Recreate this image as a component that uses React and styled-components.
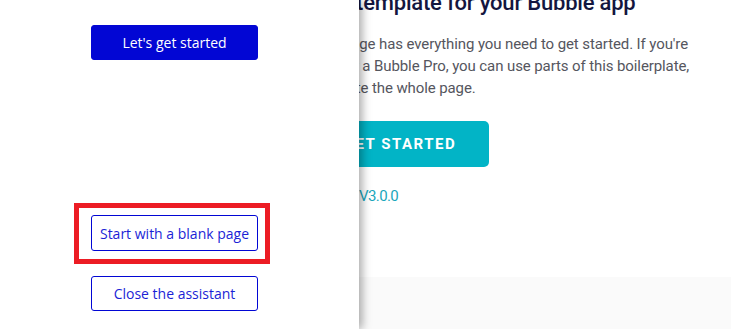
import React from "react";
import styled, { createGlobalStyle } from "styled-components";

const Global = createGlobalStyle`
  html, body { margin: 0; padding: 0; background: #fff; }
  #root { width: 731px; height: 329px; overflow: hidden; position: relative; }
`;

const Page = styled.div`
  position: relative;
  width: 731px;
  height: 329px;
  overflow: hidden;
  background: #fff;
  display: flex;
  flex-direction: column;
`;

const Hero = styled.section`
  height: 289px;
  flex: none;
  display: flex;
  flex-direction: column;
  align-items: flex-start;
  padding-left: 309px;
  margin-top: -12px;
  box-sizing: border-box;
  font-family: Roboto, "Liberation Sans", sans-serif;
`;

const Title = styled.h1`
  margin: 0 0 0 5px;
  font-size: 22px;
  line-height: 30px;
  font-weight: 500;
  letter-spacing: -0.2px;
  color: #14163f;
  white-space: nowrap;
`;

const Body = styled.p`
  margin: 16px 0 0 2px;
  font-size: 15px;
  line-height: 21.8px;
  letter-spacing: -0.1px;
  color: #55565e;
  white-space: nowrap;
`;

const Cta = styled.button`
  margin-top: 22px;
  margin-left: 2px;
  width: 178px;
  height: 46px;
  padding: 0;
  border: none;
  border-radius: 5px;
  background: #02b4c6;
  color: #fff;
  font-family: Roboto, "Liberation Sans", sans-serif;
  font-weight: 700;
  font-size: 15px;
  letter-spacing: 1.5px;
`;

const Version = styled.div`
  margin: 20px 0 0 50px;
  font-size: 15px;
  letter-spacing: -0.6px;
  color: #1aa6bb;
`;

const Footer = styled.div`
  flex: 1;
  background: #fafafa;
`;

const Panel = styled.aside`
  position: absolute;
  left: 0;
  top: 0;
  bottom: 0;
  width: 359px;
  background: #fff;
  box-shadow: 3px 0 9px rgba(0, 0, 0, 0.35);
  display: flex;
  flex-direction: column;
  align-items: flex-start;
  padding: 25px 0 0 91px;
  box-sizing: border-box;
`;

const AssistantButton = styled.button`
  width: 167px;
  height: ${(p) => (p.$tall ? 36 : 35)}px;
  border-radius: 3px;
  font-family: "Open Sans", "Noto Sans", sans-serif;
  font-size: 14px;
  padding: 0;
  cursor: pointer;
  border: 1px solid #0206d4;
  background: ${(p) => (p.$primary ? "#0206d4" : "#fff")};
  color: ${(p) => (p.$primary ? "#fff" : "#1b1fd6")};
`;

const Highlight = styled.div`
  margin: 143px 0 0 -17px;
  border: 5px solid #ec1c24;
  padding: 7px 7px 8px 12px;
`;

const CloseWrap = styled.div`
  margin-top: 12px;
`;

export default function App() {
  return (
    <>
      <Global />
      <Page>
        <Hero>
          <Title>The template for your Bubble app</Title>
          <Body>
            This page has everything you need to get started. If you're
            <br />
            already a Bubble Pro, you can use parts of this boilerplate,
            <br />
            or delete the whole page.
          </Body>
          <Cta>GET STARTED</Cta>
          <Version>V3.0.0</Version>
        </Hero>
        <Footer />
        <Panel>
          <AssistantButton $primary>Let's get started</AssistantButton>
          <Highlight>
            <AssistantButton $tall>Start with a blank page</AssistantButton>
          </Highlight>
          <CloseWrap>
            <AssistantButton>Close the assistant</AssistantButton>
          </CloseWrap>
        </Panel>
      </Page>
    </>
  );
}
